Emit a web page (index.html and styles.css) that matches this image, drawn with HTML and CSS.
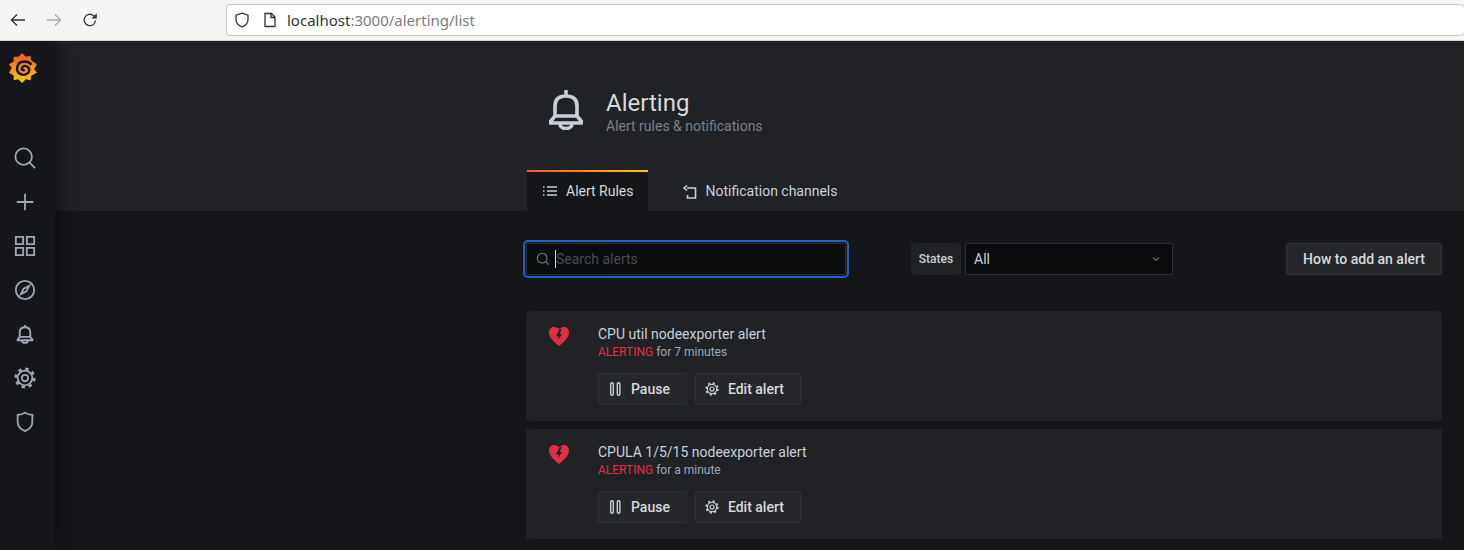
FILE: index.html
```html
<!DOCTYPE html>
<html lang="en">

<head>
  <meta charset="UTF-8">
  <title>Alerting</title>
  <link rel="stylesheet" href="styles.css">
</head>
<body>
  <div class="browser-bar">
    <svg class="nav-btn" viewBox="0 0 16 16"><path d="M15 8H1.500M7 2.500L1.500 8 7 13.500"/></svg>
    <svg class="nav-btn nav-off" viewBox="0 0 16 16"><path d="M1 8h13.500M9 2.500L14.500 8 9 13.500"/></svg>
    <svg class="nav-btn" viewBox="0 0 16 16"><path d="M13.500 8.500A5.700 5.700 0 1 1 11.500 3.600L14 5.500"/><path class="fill" d="M14.800 1.200v5.400H9.400z"/></svg>
    <div class="url-box">
      <svg class="url-icon" viewBox="0 0 16 16"><path d="M8 1.200l6 2v4.600c0 3.300-2.600 5.800-6 7-3.400-1.200-6-3.700-6-7V3.200z"/></svg>
      <svg class="url-icon page-icon" viewBox="0 0 16 16"><path d="M3 1.500h6.500l3.500 3.500v9.500H3zM9 1.500V5.500h4"/></svg>
      <span class="url-host">localhost</span><span class="url-rest">:3000/alerting/list</span>
    </div>
  </div>

  <div class="app">
    <nav class="sidebar">
      <svg class="logo" viewBox="0 0 30 32">
        <defs>
          <linearGradient id="logograd" x1="0" y1="1" x2="0" y2="0">
            <stop offset="0" stop-color="#fbca0a"/>
            <stop offset="1" stop-color="#f05a28"/>
          </linearGradient>
        </defs>
        <path fill="url(#logograd)" d="M14 0l4 4 5-1 1 5 6 4-3 5 3 4-6 3-1 5-5-1-4 4-4-4-5 1 0-5-5-3 3-5-3-4 5-3 0-5 5 0z"/>
        <path class="logo-swirl" d="M24 12.500C21 8 13 8 10 12c-3 5-1 10 4 11 6 1 9-4 7-7-2-3-6-3-7 0-1 2 1 3 3 2"/>
      </svg>
      <svg class="side-icon" viewBox="0 0 24 24"><circle cx="10.500" cy="10.500" r="9"/><path d="M17 17l6 6"/></svg>
      <svg class="side-icon" viewBox="0 0 24 24"><path d="M12 3v18M3 12h18"/></svg>
      <svg class="side-icon" viewBox="0 0 24 24"><path d="M2 2h8v8H2zM14 2h8v8h-8zM2 14h8v8H2zM14 14h8v8h-8z"/></svg>
      <svg class="side-icon" viewBox="0 0 24 24"><circle cx="12" cy="12" r="10"/><path d="M16.500 7.500l-3 6-6 3 3-6z"/></svg>
      <svg class="side-icon side-bell" viewBox="-6 -3 46 46"><path d="M6 26V16C6 9 10 6 17 6s11 3 11 10v10M6 26h22M6 26l-4.500 5.500V33h31v-1.500L28 26M11 34c0 6 12 6 12 0M17 1v5"/></svg>
      <svg class="side-icon" viewBox="0 0 24 24"><circle cx="12" cy="12" r="3.500"/><circle cx="12" cy="12" r="8"/><circle class="gear-teeth" cx="12" cy="12" r="10"/></svg>
      <svg class="side-icon" viewBox="0 0 24 24"><path d="M12 2c2.500 1.500 5 2.200 8 2.200v7.800c0 4.500-3.500 8-8 10-4.500-2-8-5.500-8-10V4.200c3 0 5.500-.7 8-2.200z"/></svg>
    </nav>

    <main class="main">
      <header class="page-header">
        <div class="header-inner">
          <div class="title-row">
            <svg class="title-icon" viewBox="0 0 34 40"><path d="M6 26V16C6 9 10 6 17 6s11 3 11 10v10M6 26h22M6 26l-4.500 5.500V33h31v-1.500L28 26M11 34c0 6 12 6 12 0M17 1v5"/></svg>
            <div>
              <h1>Alerting</h1>
              <div class="subtitle">Alert rules &amp; notifications</div>
            </div>
          </div>
          <div class="tabs">
            <div class="tab tab-active">
              <svg class="tab-icon" viewBox="0 0 16 16"><path d="M5 4h10M5 8h10M5 12h10M1 4h1.500M1 8h1.500M1 12h1.500"/></svg>
              Alert Rules
            </div>
            <div class="tab">
              <svg class="tab-icon notify-icon" viewBox="0 0 16 16"><path d="M5 5h8.500v10H5.500v-3M5 2.500L2 5l3 2.500"/></svg>
              Notification channels
            </div>
          </div>
        </div>
      </header>

      <div class="content">
        <div class="filters">
          <div class="search">
            <svg class="search-icon" viewBox="0 0 16 16"><circle cx="7" cy="7" r="5.500"/><path d="M11 11l3.500 3.500"/></svg>
            <span class="caret"></span><span class="placeholder">Search alerts</span>
          </div>
          <div class="state-filter">
            <span class="state-label">States</span>
            <div class="state-select">
              All
              <svg class="chevron" viewBox="0 0 10 10"><path d="M2 3.500l3 3 3-3"/></svg>
            </div>
          </div>
          <button class="btn how-btn">How to add an alert</button>
        </div>

        <div class="alert-card">
          <svg class="heart" viewBox="0 0 20 19"><path d="M10 2C12 .5 14 0 15.500 0 18 0 20 2.500 20 5.500 20 11 14 15.500 10 19 6 15.500 0 11 0 5.500 0 2.500 2 0 4.500 0 6 0 8 .5 10 2z"/><path class="heart-crack" d="M10.800 1.500L7 9.500l2.800-.3L8.800 13.500 13 7h-2.200l1.800-5z"/></svg>
          <div class="alert-body">
            <div class="alert-name">CPU util nodeexporter alert</div>
            <div class="alert-state"><span class="alerting">ALERTING</span> for 7 minutes</div>
            <div class="alert-actions">
              <button class="btn small-btn"><svg class="btn-icon" viewBox="0 0 14 14"><rect x="2.700" y="0.700" width="2.600" height="12.600" rx="1.300"/><rect x="9.300" y="0.700" width="2.600" height="12.600" rx="1.300"/></svg>Pause</button>
              <button class="btn small-btn"><svg class="btn-icon btn-gear" viewBox="0 0 24 24"><circle cx="12" cy="12" r="3.500"/><circle cx="12" cy="12" r="8"/><circle class="gear-teeth" cx="12" cy="12" r="10"/></svg>Edit alert</button>
            </div>
          </div>
        </div>

        <div class="alert-card">
          <svg class="heart" viewBox="0 0 20 19"><path d="M10 2C12 .5 14 0 15.500 0 18 0 20 2.500 20 5.500 20 11 14 15.500 10 19 6 15.500 0 11 0 5.500 0 2.500 2 0 4.500 0 6 0 8 .5 10 2z"/><path class="heart-crack" d="M10.800 1.500L7 9.500l2.800-.3L8.800 13.500 13 7h-2.200l1.800-5z"/></svg>
          <div class="alert-body">
            <div class="alert-name">CPULA 1/5/15 nodeexporter alert</div>
            <div class="alert-state"><span class="alerting">ALERTING</span> for a minute</div>
            <div class="alert-actions">
              <button class="btn small-btn"><svg class="btn-icon" viewBox="0 0 14 14"><rect x="2.700" y="0.700" width="2.600" height="12.600" rx="1.300"/><rect x="9.300" y="0.700" width="2.600" height="12.600" rx="1.300"/></svg>Pause</button>
              <button class="btn small-btn"><svg class="btn-icon btn-gear" viewBox="0 0 24 24"><circle cx="12" cy="12" r="3.500"/><circle cx="12" cy="12" r="8"/><circle class="gear-teeth" cx="12" cy="12" r="10"/></svg>Edit alert</button>
            </div>
          </div>
        </div>
      </div>
    </main>
  </div>
</body>

</html>
```

FILE: styles.css
```css
* {
  margin: 0;
  padding: 0;
  box-sizing: border-box;
}

html, body {
  height: 550px;
  overflow: hidden;
}

body {
  background: #141619;
  font-family: Roboto, "Liberation Sans", sans-serif;
  font-size: 14px;
  color: #c7d0d9;
}

svg {
  display: block;
  flex: none;
  fill: none;
}

/* browser chrome */
.browser-bar {
  height: 41px;
  background: #f6f5f4;
  border-bottom: 1px solid #d8d5d0;
  display: flex;
  align-items: center;
  padding-left: 10px;
}

.nav-btn {
  width: 16px;
  height: 16px;
  margin-right: 20px;
  stroke: #2e3436;
  stroke-width: 1.300;
}

.nav-btn .fill {
  fill: #2e3436;
  stroke: none;
}

.nav-off {
  stroke: #a9a9a9;
}

.url-box {
  height: 32px;
  width: 1239px;
  margin-left: 108px;
  flex: none;
  background: #fff;
  border: 1px solid #cdc7c2;
  border-radius: 4px;
  display: flex;
  align-items: center;
  padding-left: 7px;
  font-family: "Noto Sans", sans-serif;
  font-size: 15px;
  white-space: nowrap;
}

.url-icon {
  width: 16px;
  height: 16px;
  margin-right: 12px;
  stroke: #2e3436;
  stroke-width: 1.300;
}

.page-icon {
  margin-right: 9px;
}

.url-host {
  color: #2e3436;
}

.url-rest {
  color: #7a7a7a;
}

/* app frame */
.app {
  display: flex;
  height: 509px;
  overflow: hidden;
}

.sidebar {
  width: 55px;
  background: #141619;
  box-shadow: 0 0 20px #0a0b0c;
  display: flex;
  flex-direction: column;
  align-items: center;
  position: relative;
}

.logo {
  width: 28px;
  height: 30px;
  margin: 12px 10px 64px 0;
}

.logo-swirl {
  stroke: #141619;
  stroke-width: 2.600;
}

.side-icon {
  width: 22px;
  height: 22px;
  margin-bottom: 22px;
  margin-left: -5px;
  stroke: #9fa7b3;
  stroke-width: 2;
}

.side-bell {
  stroke-width: 4;
}

/* 8 teeth round a ring, dash + gap = 1/8 of the circle */
.gear-teeth {
  stroke-width: 3;
  stroke-dasharray: 3.600 4.254;
}

.main {
  flex: 1;
}

.page-header {
  height: 170px;
  background: #202226;
}

.header-inner {
  margin-left: 471px;
  width: 916px;
  height: 100%;
  display: flex;
  flex-direction: column;
  justify-content: space-between;
}

.title-row {
  display: flex;
  align-items: flex-start;
  padding: 48px 0 0 23px;
}

.title-icon {
  width: 34px;
  height: 40px;
  margin: 1px 23px 0 0;
  stroke: #c7d0d9;
  stroke-width: 3.600;
  stroke-linejoin: round;
  stroke-linecap: round;
}

h1 {
  font-size: 24px;
  font-weight: 400;
  line-height: 28px;
  color: #d8d9da;
}

.subtitle {
  color: #7b8087;
  line-height: 18px;
}

.tabs {
  display: flex;
  gap: 19px;
  padding-left: 1px;
}

.tab {
  height: 41px;
  padding: 0 15px 1px;
  display: flex;
  align-items: center;
  gap: 8px;
  border-top: 2px solid transparent;
  white-space: nowrap;
}

.tab-active {
  padding-right: 14px;
  background: #141619;
  border-image: linear-gradient(90deg, #f05a28, #fbca0a) 1;
  border-width: 2px 0 0;
  color: #d8d9da;
}

.tab-icon {
  width: 16px;
  height: 16px;
  stroke: #c7d0d9;
  stroke-width: 1.300;
}

.notify-icon {
  stroke-width: 1.600;
}

.content {
  margin-left: 471px;
  width: 916px;
}

.filters {
  display: flex;
  align-items: center;
  height: 32px;
  margin-top: 32px;
  margin-bottom: 36px;
}

.search {
  width: 320px;
  height: 32px;
  background: #0b0c0e;
  border: 1px solid #2c3235;
  border-radius: 2px;
  box-shadow: 0 0 0 1px #141619, 0 0 0 3px #1f60c4;
  display: flex;
  align-items: center;
  padding-left: 9px;
}

.search-icon {
  width: 14px;
  height: 14px;
  margin-right: 5px;
  stroke: #7b8087;
  stroke-width: 1.200;
}

.caret {
  width: 1px;
  height: 18px;
  background: #d8d9da;
}

.placeholder {
  color: #464c54;
}

.state-filter {
  display: flex;
  margin-left: 65px;
  gap: 4px;
}

.state-label {
  width: 50px;
  height: 32px;
  background: #202226;
  border-radius: 2px;
  font-size: 12px;
  font-weight: 500;
  display: flex;
  align-items: center;
  justify-content: center;
}

.state-select {
  width: 208px;
  height: 32px;
  background: #0b0c0e;
  border: 1px solid #2c3235;
  border-radius: 2px;
  display: flex;
  align-items: center;
  justify-content: space-between;
  padding: 0 11px 0 8px;
}

.chevron {
  width: 10px;
  height: 10px;
  stroke: #9fa7b3;
  stroke-width: 1;
}

.btn {
  font-family: inherit;
  font-size: 14px;
  font-weight: 500;
  color: #d8d9da;
  background: #25272b;
  border: 1px solid #2c3235;
  border-radius: 2px;
  height: 32px;
  display: flex;
  align-items: center;
}

.how-btn {
  width: 156px;
  margin-left: 113px;
  justify-content: center;
}

.alert-card {
  height: 110px;
  margin-bottom: 8px;
  background: #202226;
  border-radius: 3px;
  display: flex;
  padding: 16px 0 0 23px;
}

.heart {
  width: 20px;
  height: 19px;
  fill: #e02f44;
  margin-right: 29px;
}

.heart-crack {
  fill: #202226;
}

.alert-body {
  margin-top: -2px;
}

.alert-name {
  line-height: 18px;
  color: #c7d0d9;
}

.alert-state {
  font-size: 12px;
  line-height: 18px;
  color: #9fa7b3;
}

.alerting {
  color: #e02f44;
}

.alert-actions {
  display: flex;
  gap: 8px;
  margin-top: 12px;
}

.small-btn {
  padding: 0 16px 0 9px;
  gap: 9px;
  background: #25272b;
}

.btn-icon {
  width: 14px;
  height: 14px;
  stroke: #c7d0d9;
  stroke-width: 1.400;
}

.btn-gear {
  stroke-width: 2;
}
```
